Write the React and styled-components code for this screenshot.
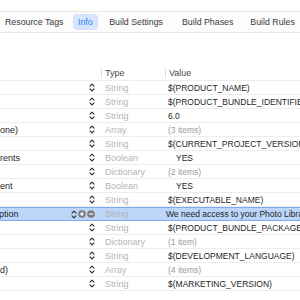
import React from "react";
import styled, { createGlobalStyle } from "styled-components";

const GlobalStyle = createGlobalStyle`
  body {
    margin: 0;
    background: #ffffff;
    font-family: "Liberation Sans", "Helvetica", Arial, sans-serif;
  }
`;

const Page = styled.div`
  width: 300px;
  height: 300px;
  overflow: hidden;
  background: #ffffff;
`;

const TabBar = styled.div`
  margin-top: 11px;
  height: 20px;
  border-top: 1px solid #e6e6e6;
  border-bottom: 1px solid #e6e6e6;
  background: #fcfcfc;
  display: flex;
  align-items: center;
  white-space: nowrap;
`;

const Tab = styled.div`
  font-size: 8.8px;
  color: ${(p) => (p.$active ? "#2d7cf5" : "#3a3a3a")};
  background: ${(p) => (p.$active ? "#d6e5fc" : "transparent")};
  border-radius: 4px;
  padding: 3px ${(p) => (p.$active ? 5.5 : 5)}px;
  margin-right: ${(p) => p.$gap}px;
  flex-shrink: 0;
`;

const Table = styled.div`
  margin-top: 33px;
`;

const Row = styled.div`
  display: grid;
  grid-template-columns: 101px 64px 1fr;
  height: 14px;
  box-sizing: border-box;
  align-items: center;
  font-size: 9px;
  white-space: nowrap;
  border-bottom: 1px solid ${(p) => (p.$selected ? "#7ea9ec" : "#ededed")};
  border-top: ${(p) => (p.$selected ? "1px solid #7ea9ec" : "none")};
  background: ${(p) => (p.$selected ? "#bcd5f8" : "transparent")};
`;

const HeaderRow = styled(Row)`
  height: 15px;
  color: #4a4a4a;
`;

const HeadCell = styled.div`
  display: flex;
  align-items: center;
  height: 9px;
  border-left: ${(p) => (p.$sep ? "1px solid #dddddd" : "none")};
  padding-left: 3px;
`;

const KeyCell = styled.div`
  display: flex;
  align-items: center;
  overflow: hidden;
  color: #1e1e1e;
  padding-right: 6px;
`;

const KeyText = styled.span`
  flex: 1;
  margin-left: ${(p) => p.$shift || 0}px;
`;

const Controls = styled.div`
  display: flex;
  align-items: center;
  gap: 1px;
`;

const TypeCell = styled.div`
  color: #b4b4b4;
  padding-left: 4px;
`;

const ValueCell = styled.div`
  font-size: 8.5px;
  color: ${(p) => (p.$muted ? "#9a9a9a" : "#1e1e1e")};
  padding-left: ${(p) => (p.$indent ? 11 : 3)}px;
  overflow: hidden;
  display: flex;
  align-items: center;
`;

const FaintStepper = styled.span`
  margin-left: -11px;
  margin-right: 3px;
  display: flex;
`;

const Stepper = ({ color = "#2a2a2a" }) => (
  <svg width="6" height="9" viewBox="0 0 6 9">
    <path d="M1 3.2 L3 1.2 L5 3.2" fill="none" stroke={color} strokeWidth="1.1" strokeLinecap="round" strokeLinejoin="round" />
    <path d="M1 5.8 L3 7.8 L5 5.8" fill="none" stroke={color} strokeWidth="1.1" strokeLinecap="round" strokeLinejoin="round" />
  </svg>
);

const RoundButton = ({ plus }) => (
  <svg width="8" height="8" viewBox="0 0 8 8">
    <circle cx="4" cy="4" r="3.8" fill="#7b7b7b" />
    <path d="M2 4 H6" stroke="#ffffff" strokeWidth="1.2" />
    {plus && <path d="M4 2 V6" stroke="#ffffff" strokeWidth="1.2" />}
  </svg>
);

const tabs = [
  { label: "Resource Tags", gap: 4 },
  { label: "Info", active: true, gap: 6 },
  { label: "Build Settings", gap: 9 },
  { label: "Build Phases", gap: 7 },
  { label: "Build Rules", gap: 0 },
];

const rows = [
  { key: "", type: "String", value: "$(PRODUCT_NAME)" },
  { key: "", type: "String", value: "$(PRODUCT_BUNDLE_IDENTIFIER)" },
  { key: "", type: "String", value: "6.0" },
  { key: "one)", type: "Array", value: "(3 items)", muted: true },
  { key: "", type: "String", value: "$(CURRENT_PROJECT_VERSION)" },
  { key: "rents", type: "Boolean", value: "YES", indent: true },
  { key: "", type: "Dictionary", value: "(2 items)", muted: true },
  { key: "ent", type: "Boolean", value: "YES", indent: true },
  { key: "", type: "String", value: "$(EXECUTABLE_NAME)" },
  {
    key: "ption",
    type: "String",
    value: "We need access to your Photo Library to save images",
    selected: true,
  },
  { key: "", type: "String", value: "$(PRODUCT_BUNDLE_PACKAGE_TYPE)" },
  { key: "", type: "Dictionary", value: "(1 item)", muted: true },
  { key: "", type: "String", value: "$(DEVELOPMENT_LANGUAGE)" },
  { key: "d)", type: "Array", value: "(4 items)", muted: true },
  { key: "", type: "String", value: "$(MARKETING_VERSION)" },
];

const App = () => {
  return (
    <Page>
      <GlobalStyle />
      <TabBar>
        {tabs.map((t) => (
          <Tab key={t.label} $active={t.active} $gap={t.gap}>
            {t.label}
          </Tab>
        ))}
      </TabBar>
      <Table>
        <HeaderRow>
          <HeadCell />
          <HeadCell $sep>Type</HeadCell>
          <HeadCell $sep>Value</HeadCell>
        </HeaderRow>
        {rows.map((r, i) => (
          <Row key={i} $selected={r.selected}>
            <KeyCell>
              <KeyText $shift={r.selected ? -1 : 0}>{r.key}</KeyText>
              <Controls>
                <Stepper />
                {r.selected && <RoundButton plus />}
                {r.selected && <RoundButton />}
              </Controls>
            </KeyCell>
            <TypeCell>{r.type}</TypeCell>
            <ValueCell $muted={r.muted} $indent={r.indent}>
              {r.selected && (
                <FaintStepper>
                  <Stepper color="#9fb4d4" />
                </FaintStepper>
              )}
              {r.value}
            </ValueCell>
          </Row>
        ))}
      </Table>
    </Page>
  );
};

export default App;
